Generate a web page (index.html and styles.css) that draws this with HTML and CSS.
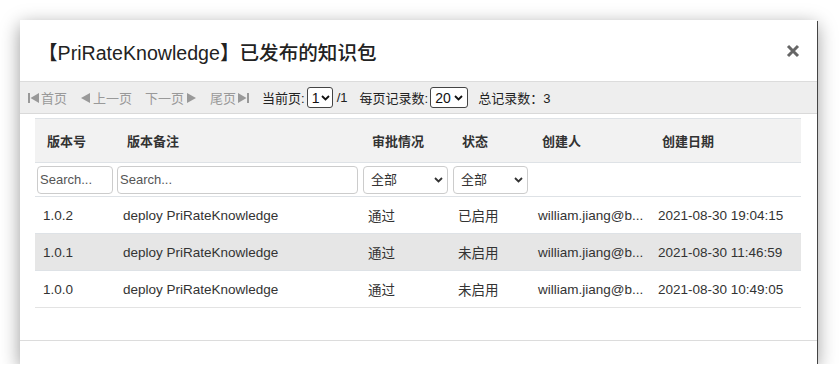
FILE: index.html
```html
<!DOCTYPE html>
<html lang="zh-CN">
<head>
  <meta charset="UTF-8" />
  <meta name="viewport" content="width=device-width, initial-scale=1.0"/>
  <title>已发布的知识包</title>
  <link rel="stylesheet" href="styles.css">
</head>
<body>
  <div class="modal">
    <div class="modal-header">
      <h4 class="modal-title">【PriRateKnowledge】已发布的知识包</h4>
      <button class="close" type="button">
        <svg width="14" height="14" viewBox="0 0 14 14"><path d="M2 2 L12 12 M12 2 L2 12" stroke="#666" stroke-width="3"/></svg>
      </button>
    </div>

    <div class="pager">
      <span class="pg disabled">
        <svg width="11" height="10" viewBox="0 0 11 10"><rect x="0" y="0" width="2" height="10"/><path d="M11 0 L11 10 L2.5 5 Z"/></svg>首页
      </span>
      <span class="pg disabled">
        <svg width="11" height="10" viewBox="0 0 11 10"><path d="M10 0 L10 10 L1 5 Z"/></svg>上一页
      </span>
      <span class="pg disabled">
        下一页<svg width="11" height="10" viewBox="0 0 11 10"><path d="M1 0 L1 10 L10 5 Z"/></svg>
      </span>
      <span class="pg disabled">
        尾页<svg width="11" height="10" viewBox="0 0 11 10"><path d="M0 0 L0 10 L8.5 5 Z"/><rect x="9" y="0" width="2" height="10"/></svg>
      </span>
      <span class="pg-label">当前页:</span>
      <span class="sel-wrap small">
        <select class="pg-select"><option>1</option></select>
        <svg class="chev" width="9" height="6" viewBox="0 0 9 6"><path d="M1 1 L4.5 4.5 L8 1" fill="none" stroke="#111" stroke-width="1.8"/></svg>
      </span>
      <span class="pg-total">/1</span>
      <span class="pg-label">每页记录数:</span>
      <span class="sel-wrap medium">
        <select class="pg-select"><option>20</option></select>
        <svg class="chev" width="9" height="6" viewBox="0 0 9 6"><path d="M1 1 L4.5 4.5 L8 1" fill="none" stroke="#111" stroke-width="1.8"/></svg>
      </span>
      <span class="pg-count">总记录数：3</span>
    </div>

    <div class="modal-body">
      <table class="grid">
        <colgroup>
          <col style="width:80px">
          <col style="width:245px">
          <col style="width:90px">
          <col style="width:80px">
          <col style="width:120px">
          <col style="width:151px">
        </colgroup>
        <thead>
          <tr class="head">
            <th>版本号</th>
            <th>版本备注</th>
            <th>审批情况</th>
            <th>状态</th>
            <th>创建人</th>
            <th>创建日期</th>
          </tr>
          <tr class="filters">
            <td><input class="search" type="text" placeholder="Search..."></td>
            <td><input class="search" type="text" placeholder="Search..."></td>
            <td class="sel-cell">
              <span class="sel-wrap">
                <select class="filter-select"><option>全部</option></select>
                <svg class="chev" width="9" height="6" viewBox="0 0 9 6"><path d="M1 1 L4.5 4.5 L8 1" fill="none" stroke="#333" stroke-width="1.8"/></svg>
              </span>
            </td>
            <td class="sel-cell">
              <span class="sel-wrap">
                <select class="filter-select"><option>全部</option></select>
                <svg class="chev" width="9" height="6" viewBox="0 0 9 6"><path d="M1 1 L4.5 4.5 L8 1" fill="none" stroke="#333" stroke-width="1.8"/></svg>
              </span>
            </td>
            <td></td>
            <td></td>
          </tr>
        </thead>
        <tbody>
          <tr>
            <td>1.0.2</td>
            <td>deploy PriRateKnowledge</td>
            <td>通过</td>
            <td>已启用</td>
            <td>william.jiang@b...</td>
            <td>2021-08-30 19:04:15</td>
          </tr>
          <tr class="active">
            <td>1.0.1</td>
            <td>deploy PriRateKnowledge</td>
            <td>通过</td>
            <td>未启用</td>
            <td>william.jiang@b...</td>
            <td>2021-08-30 11:46:59</td>
          </tr>
          <tr>
            <td>1.0.0</td>
            <td>deploy PriRateKnowledge</td>
            <td>通过</td>
            <td>未启用</td>
            <td>william.jiang@b...</td>
            <td>2021-08-30 10:49:05</td>
          </tr>
        </tbody>
      </table>
    </div>

    <div class="modal-footer"></div>
  </div>
</body>
</html>
```

FILE: styles.css
```css
body {
  margin: 0;
  background: #fff;
  font-family: 'Liberation Sans', 'Noto Sans CJK SC', sans-serif;
  font-size: 13px;
  color: #333;
}

.modal {
  width: 797px;
  margin: 20px 0 0 20px;
  background: #fff;
  box-shadow: 1px 1px 0 #444, 0 5px 18px rgba(0, 0, 0, 0.4);
}

/* header */
.modal-header {
  height: 61px;
  display: flex;
  align-items: center;
  justify-content: space-between;
  padding: 0 17px 0 18px;
  border-bottom: 1px solid #dcdcdc;
  box-sizing: content-box;
}

.modal-title {
  margin: 0;
  font-size: 19.6px;
  font-weight: 500;
  color: #222;
  margin-top: 1px;
}

.close {
  border: none;
  background: none;
  padding: 0;
  width: 14px;
  height: 14px;
  cursor: pointer;
}

/* pager toolbar */
.pager {
  height: 31px;
  display: flex;
  align-items: center;
  padding-left: 8px;
  background: #eeeeee;
  border-bottom: 1px solid #d9d9d9;
  white-space: nowrap;
}

.pg {
  display: inline-flex;
  align-items: center;
  gap: 2px;
  margin-right: 13px;
}

.pg.disabled {
  color: #999;
  fill: #999;
}

.pg-label {
  color: #222;
  margin-right: 2px;
}

.pg-total {
  margin: 0 12px 0 4px;
  color: #222;
}

.pg-count {
  margin-left: 10px;
  color: #222;
}

.sel-wrap {
  position: relative;
  display: inline-block;
}

.sel-wrap .chev {
  position: absolute;
  right: 5px;
  top: 50%;
  margin-top: -3px;
  pointer-events: none;
}

.pg-select {
  appearance: none;
  -webkit-appearance: none;
  height: 21px;
  border: 1px solid #444;
  border-radius: 3px;
  background: #fff;
  font-family: inherit;
  font-size: 14px;
  color: #111;
  padding: 0 0 0 4px;
  display: block;
}

.sel-wrap.small .pg-select { width: 26px; }
.sel-wrap.medium .pg-select { width: 38px; }
.sel-wrap.small .chev { right: 3px; }

/* body */
.modal-body {
  padding: 4px 16px 32px 15px;
}

.grid {
  width: 766px;
  table-layout: fixed;
  border-collapse: collapse;
}

.grid th,
.grid td {
  padding: 0 8px;
  text-align: left;
  border-top: 1px solid #dee2e6;
  white-space: nowrap;
}

.grid tr.head {
  height: 44px;
  background: #f2f2f2;
}

.grid tr.head th {
  padding: 0 12px;
  font-weight: bold;
  color: #333;
}

.grid tr.filters {
  height: 34px;
}

.grid tr.filters td {
  padding: 0 2px;
}

.grid tr.filters td.sel-cell {
  padding: 0 2px 0 3px;
}

.search {
  box-sizing: border-box;
  width: 100%;
  height: 28px;
  border: 1px solid #ccc;
  border-radius: 4px;
  padding: 0 2px;
  font-family: inherit;
  font-size: 13px;
  color: #333;
  display: block;
}

.search::placeholder {
  color: #555;
}

.sel-cell .sel-wrap {
  display: block;
}

.filter-select {
  appearance: none;
  -webkit-appearance: none;
  box-sizing: border-box;
  width: 100%;
  height: 28px;
  border: 1px solid #ccc;
  border-radius: 4px;
  background: #fff;
  padding: 0 7px;
  font-family: inherit;
  font-size: 13px;
  color: #333;
  display: block;
}

.grid tbody tr {
  height: 37px;
}

.grid tbody td {
  font-size: 13.5px;
}

.grid tbody tr:last-child td {
  border-bottom: 1px solid #e3e3e3;
}

.grid tbody tr.active {
  background: #e6e6e6;
}

/* footer */
.modal-footer {
  height: 23px;
  border-top: 1px solid #dcdcdc;
}
```
